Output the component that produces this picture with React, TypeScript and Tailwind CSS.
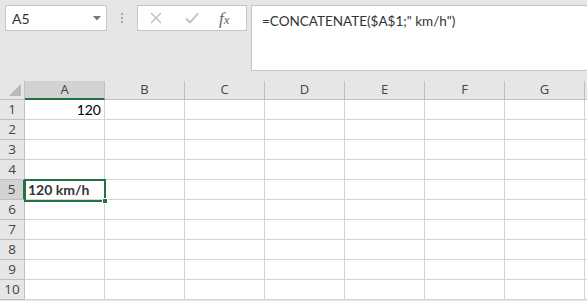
import React from 'react';

const cols = ['A', 'B', 'C', 'D', 'E', 'F', 'G'];
const rows = [1, 2, 3, 4, 5, 6, 7, 8, 9, 10];

export default function App() {
  return (
    <div className="w-[587px] h-[301px] overflow-hidden bg-[#e6e6e6] font-['Open_Sans',sans-serif]">
      {/* formula bar area */}
      <div className="flex h-[81px] pt-[5px] pl-[5px]">
        <div className="relative flex h-[26px] w-[102px] items-center border border-[#c6c6c6] bg-white pl-[6px] text-[14px] text-[#333] font-['Lato',sans-serif]">
          A5
          <svg className="absolute right-[5px] top-[10px]" width="8" height="5" viewBox="0 0 8 5">
            <path d="M0 0h8L4 4.5z" fill="#777" />
          </svg>
        </div>
        <div className="flex h-[26px] w-[30px] flex-col items-center justify-center gap-[2px]">
          <span className="h-[2px] w-[2px] bg-[#a8a8a8]" />
          <span className="h-[2px] w-[2px] bg-[#a8a8a8]" />
          <span className="h-[2px] w-[2px] bg-[#a8a8a8]" />
        </div>
        <div className="flex h-[26px] w-[110px] items-center border border-[#c6c6c6] bg-white">
          <svg className="ml-[12px]" width="12" height="12" viewBox="0 0 12 12">
            <path d="M1 1l10 10M11 1L1 11" stroke="#bdbdbd" strokeWidth="1.4" />
          </svg>
          <svg className="ml-[23px]" width="14" height="12" viewBox="0 0 14 12">
            <path d="M1 6.5l4 4L13 1.5" stroke="#bdbdbd" strokeWidth="1.8" fill="none" />
          </svg>
          <span className="ml-[20px] text-[17px] italic text-[#666] font-['Liberation_Serif',serif] leading-none">
            f<span className="text-[13px]">x</span>
          </span>
        </div>
        <div className="ml-[4px] h-[66px] flex-1 border-y border-l border-[#c6c6c6] bg-white pl-[10px] pt-[5px] text-[13.5px] text-[#333] font-['Lato',sans-serif]">
          =CONCATENATE($A$1;" km/h")
        </div>
      </div>

      {/* grid */}
      <div className="relative bg-white">
        <div className="flex h-[19px] bg-[#e6e6e6] text-[13px] text-[#444]">
          <div className="relative w-[25px] shrink-0 border-r border-b border-[#bfbfbf]">
            <svg className="absolute right-[3px] bottom-[3px]" width="12" height="12" viewBox="0 0 12 12">
              <path d="M12 0V12H0z" fill="#b9b9b9" />
            </svg>
          </div>
          {cols.map((c) => (
            <div
              key={c}
              className={`flex w-[80px] shrink-0 items-center justify-center border-r ${
                c === 'A'
                  ? 'border-b-2 border-b-[#217346] border-r-[#bfbfbf] bg-[#d2d2d2]'
                  : 'border-b border-[#bfbfbf]'
              }`}
            >
              {c}
            </div>
          ))}
          <div className="flex-1 border-b border-[#bfbfbf]" />
        </div>
        {rows.map((r) => (
          <div key={r} className="flex h-[20px]">
            <div
              className={`flex w-[25px] shrink-0 items-center justify-center border-b text-[13.5px] text-[#444] ${
                r === 5
                  ? 'border-r-2 border-r-[#217346] border-b-[#bfbfbf] bg-[#d2d2d2]'
                  : 'border-r border-[#bfbfbf] bg-[#e6e6e6]'
              }`}
            >
              {r}
            </div>
            {cols.map((c) => (
              <div
                key={c}
                className="flex w-[80px] shrink-0 items-center border-r border-b border-[#d4d4d4] px-[3px] text-[14px] text-black font-['Lato',sans-serif]"
              >
                {r === 1 && c === 'A' && <span className="ml-auto">120</span>}
                {r === 5 && c === 'A' && <span className="font-bold text-[#333]">120 km/h</span>}
              </div>
            ))}
            <div className="flex-1 border-b border-[#d4d4d4]" />
          </div>
        ))}
        {/* selection */}
        <div className="pointer-events-none absolute left-[24px] top-[98px] h-[23px] w-[82px] border-2 border-[#217346]">
          <span className="absolute -right-[4px] -bottom-[4px] h-[6px] w-[6px] border border-white bg-[#217346]" />
        </div>
      </div>
    </div>
  );
}
